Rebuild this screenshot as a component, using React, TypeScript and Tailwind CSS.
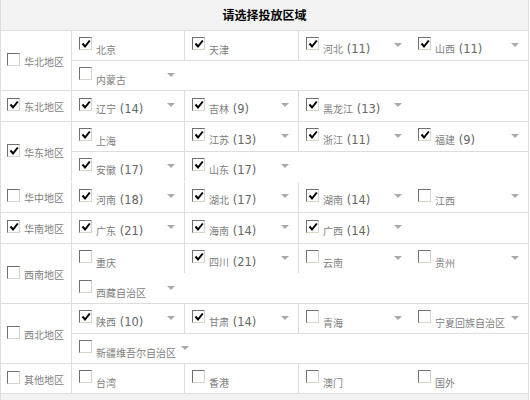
import React from 'react';

type Item = { name: string; count?: number; checked: boolean; arrow: boolean };
type Sub = { items: Item[]; line: boolean };
type Region = { name: string; checked: boolean; subs: Sub[]; bottom: boolean; tall?: boolean };

const p = (name: string, checked: boolean, arrow: boolean, count?: number): Item => ({ name, checked, arrow, count });

const regions: Region[] = [
  {
    name: '华北地区',
    checked: false,
    bottom: true,
    subs: [
      { line: true, items: [p('北京', true, false), p('天津', true, false), p('河北', true, true, 11), p('山西', true, true, 11)] },
      { line: false, items: [p('内蒙古', false, true)] },
    ],
  },
  {
    name: '东北地区',
    checked: true,
    bottom: true,
    tall: true,
    subs: [{ line: false, items: [p('辽宁', true, true, 14), p('吉林', true, true, 9), p('黑龙江', true, true, 13)] }],
  },
  {
    name: '华东地区',
    checked: true,
    bottom: false,
    subs: [
      { line: true, items: [p('上海', true, false), p('江苏', true, true, 13), p('浙江', true, true, 11), p('福建', true, true, 9)] },
      { line: false, items: [p('安徽', true, true, 17), p('山东', true, true, 17)] },
    ],
  },
  {
    name: '华中地区',
    checked: false,
    bottom: true,
    tall: true,
    subs: [{ line: false, items: [p('河南', true, true, 18), p('湖北', true, true, 17), p('湖南', true, true, 14), p('江西', false, true)] }],
  },
  {
    name: '华南地区',
    checked: true,
    bottom: true,
    tall: true,
    subs: [{ line: false, items: [p('广东', true, true, 21), p('海南', true, true, 14), p('广西', true, true, 14)] }],
  },
  {
    name: '西南地区',
    checked: false,
    bottom: true,
    subs: [
      { line: false, items: [p('重庆', false, false), p('四川', true, true, 21), p('云南', false, true), p('贵州', false, true)] },
      { line: false, items: [p('西藏自治区', false, true)] },
    ],
  },
  {
    name: '西北地区',
    checked: false,
    bottom: true,
    subs: [
      { line: true, items: [p('陕西', true, true, 10), p('甘肃', true, true, 14), p('青海', false, true), p('宁夏回族自治区', false, true)] },
      { line: false, items: [p('新疆维吾尔自治区', false, true)] },
    ],
  },
  {
    name: '其他地区',
    checked: false,
    bottom: true,
    subs: [{ line: false, items: [p('台湾', false, false), p('香港', false, false), p('澳门', false, false), p('国外', false, false)] }],
  },
];

function Box({ checked }: { checked: boolean }) {
  return (
    <span className="relative inline-block w-[13px] h-[13px] shrink-0 bg-white border-t border-l border-t-[#6f6f6f] border-l-[#6f6f6f] border-b border-r border-b-[#d8d4c8] border-r-[#d8d4c8]">
      {checked && (
        <svg className="absolute left-[1px] top-[1px]" width="10" height="10" viewBox="0 0 10 10">
          <path d="M1.5 4.5 L4 7.5 L8.8 1.5" fill="none" stroke="#000" strokeWidth="2" />
        </svg>
      )}
    </span>
  );
}

function Arrow() {
  return <span className="inline-block w-0 h-0 border-x-[4px] border-t-[4px] border-x-transparent border-t-[#aaa]" />;
}

function Cell({ item, col, single }: { item: Item; col: number; single: boolean }) {
  const width =
    col === 0 ? (single ? 'min-w-[112px]' : 'w-[112px]') : col === 1 ? 'w-[114px] border-l border-[#ddd]' : col === 2 ? 'w-[113px] border-l border-[#ddd]' : 'flex-1';
  return (
    <div className={`${width} shrink-0 flex items-center pl-[7px] pr-[9px]`}>
      <span className="-mt-[4px] flex">
        <Box checked={item.checked} />
      </span>
      <span className="ml-[4px] mt-[2px] whitespace-nowrap text-[#808080]">
        <span className="text-[10px]">{item.name}</span>
        {item.count !== undefined && (
          <span className="text-[11.5px] text-[#666] font-['DejaVu_Sans']"> ({item.count})</span>
        )}
      </span>
      {item.arrow && (
        <span className="ml-auto pl-[5px] -mt-[2px] flex">
          <Arrow />
        </span>
      )}
    </div>
  );
}

export default function App() {
  return (
    <div className="w-[529px] bg-white border-x border-[#ddd] font-['Noto_Sans_CJK_SC',sans-serif] leading-none">
      <div className="h-[31px] bg-[#f3f3f3] border-b border-[#ddd] flex items-center justify-center text-[12px] font-bold text-black">
        请选择投放区域
      </div>
      {regions.map((r) => (
        <div key={r.name} className={`flex border-b ${r.bottom ? 'border-[#ddd]' : 'border-transparent'}`}>
          <div className="w-[71px] shrink-0 border-r border-[#ddd] flex items-center pl-[6px]">
            <span className="-mt-[3px] flex">
              <Box checked={r.checked} />
            </span>
            <span className="ml-[4px] mt-[2px] text-[10px] text-[#808080] whitespace-nowrap">{r.name}</span>
          </div>
          <div className="flex-1 flex flex-col">
            {r.subs.map((s, i) => {
              const last = i === r.subs.length - 1;
              const line = last ? '' : s.line ? 'border-b border-[#ddd]' : 'border-b border-transparent';
              return (
                <div key={i} className={`flex ${r.tall ? 'h-[30px]' : last ? 'h-[29px]' : 'h-[30px]'} ${line}`}>
                  {s.items.map((it, ci) => (
                    <Cell key={it.name} item={it} col={ci} single={s.items.length === 1} />
                  ))}
                </div>
              );
            })}
          </div>
        </div>
      ))}
      <div className="h-[10px] bg-[#f3f3f3]" />
    </div>
  );
}
